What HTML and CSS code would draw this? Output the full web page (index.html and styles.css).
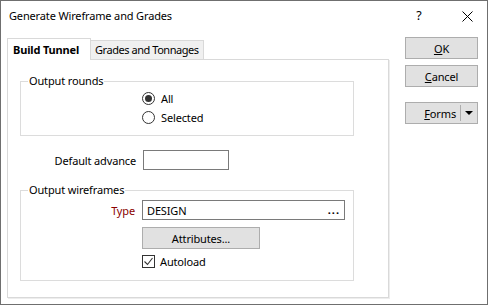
FILE: index.html
```html
<!DOCTYPE html>
<html>
<head>
<meta charset="utf-8">
<link rel="stylesheet" href="styles.css">
</head>
<body>
<div class="dialog">
  <div class="titlebar">
    <span class="title">Generate Wireframe and Grades</span>
    <span class="help">?</span>
    <span class="close"><svg width="11" height="11" viewBox="0 0 11 11"><path d="M0.5 0.5 L10.5 10.5 M10.5 0.5 L0.5 10.5" stroke="#000" stroke-width="1" fill="none"/></svg></span>
  </div>
  <div class="content">
    <div class="tabs-area">
      <div class="tabs">
        <div class="tab active">Build Tunnel</div>
        <div class="tab tight">Grades and Tonnages</div>
      </div>
      <div class="panel">
        <div class="group g-rounds">
          <span class="legend">Output rounds</span>
          <div class="radios">
            <div class="radio"><span class="rb checked"></span>All</div>
            <div class="radio"><span class="rb"></span>Selected</div>
          </div>
        </div>
        <div class="row advance">
          <span class="lbl w116">Default advance</span>
          <span class="input short"></span>
        </div>
        <div class="group g-wf">
          <span class="legend">Output wireframes</span>
          <div class="row">
            <span class="lbl w114 red">Type</span>
            <span class="input long"><span>DESIGN</span><span class="dots">...</span></span>
          </div>
          <div class="btn attr">Attributes...</div>
          <div class="check"><span class="cb"><svg width="11" height="11" viewBox="0 0 11 11"><path d="M1.5 5.5 L4.5 8.5 L9.5 2" stroke="#333" stroke-width="1.1" fill="none"/></svg></span>Autoload</div>
        </div>
      </div>
    </div>
    <div class="buttons">
      <div class="btn side"><span><u>O</u>K</span></div>
      <div class="btn side cancel"><span><u>C</u>ancel</span></div>
      <div class="btn side forms">
        <span class="forms-label"><u>F</u>orms</span>
        <span class="sep"></span>
        <span class="arrow"></span>
      </div>
    </div>
  </div>
</div>
</body>
</html>
```

FILE: styles.css
```css
* { box-sizing: border-box; }
html, body { margin: 0; padding: 0; background: #fff; }
body {
  font-family: "Noto Sans", "Open Sans", sans-serif;
  font-size: 11px;
  letter-spacing: -0.15px;
  color: #000;
}
.dialog {
  width: 488px;
  height: 305px;
  border: 1px solid #6f6f6f;
  background: #fff;
  display: flex;
  flex-direction: column;
}
.titlebar {
  height: 29px;
  display: flex;
  align-items: center;
  flex: none;
  font-size: 11px;
}
.title { padding-left: 8px; flex: 1; }
.help { width: 12px; text-align: center; margin-right: 37px; font-size: 12.5px; }
.close { width: 11px; height: 11px; margin-right: 14px; display: flex; margin-top: 1px; }
.content {
  display: flex;
  padding: 8px 0 0 6px;
}
.tabs-area { width: 383px; flex: none; }
.tabs {
  display: flex;
  align-items: flex-end;
  height: 21px;
}
.tab {
  height: 19px;
  line-height: 18px;
  border: 1px solid #d9d9d9;
  border-left: none;
  border-bottom: none;
  background: #f0f0f0;
  padding-left: 4px;
  width: 113px;
  white-space: nowrap;
}
.tab.tight { letter-spacing: -0.45px; }
.tab.active {
  height: 22px;
  line-height: 21px;
  margin-bottom: -1px;
  background: #fff;
  border-left: 1px solid #d9d9d9;
  font-weight: bold;
  width: 84px;
  padding-left: 5px;
  position: relative;
  z-index: 1;
}
.panel {
  width: 382px;
  height: 239px;
  border: 1px solid #d9d9d9;
  box-shadow: 1px 1px 0 #ededed;
  padding: 0 0 0 12px;
}
.group {
  width: 334px;
  border: 1px solid #dcdcdc;
  position: relative;
  margin-top: 21px;
}
.legend {
  position: absolute;
  left: 7px;
  top: -9px;
  background: #fff;
  padding: 0 1px;
  line-height: 16px;
}
.g-rounds { height: 55px; }
.radios { padding: 7px 0 0 121px; }
.radio {
  height: 19px;
  display: flex;
  align-items: center;
  gap: 6px;
}
.rb {
  width: 13px;
  height: 13px;
  border: 1px solid #333;
  border-radius: 50%;
  display: flex;
  align-items: center;
  justify-content: center;
  flex: none;
}
.rb.checked::after {
  content: "";
  width: 7px;
  height: 7px;
  border-radius: 50%;
  background: #333;
}
.row { display: flex; align-items: center; gap: 7px; }
.advance { margin-top: 14px; }
.lbl { text-align: right; flex: none; white-space: nowrap; }
.w116 { width: 116px; }
.w114 { width: 114px; }
.red { color: #8b0000; }
.input {
  height: 20px;
  border: 1px solid #7a7a7a;
  display: flex;
  align-items: center;
  padding: 0 4px 0 4px;
  flex: none;
}
.input.short { width: 86px; }
.input.long { width: 203px; justify-content: space-between; }
.dots { font-weight: bold; letter-spacing: 1px; margin-bottom: 2px; }
.g-wf { height: 91px; margin-top: 20px; padding-top: 9px; }
.btn {
  background: #e1e1e1;
  border: 1px solid #adadad;
  display: flex;
  align-items: center;
  justify-content: center;
}
.attr { width: 118px; height: 22px; margin: 7px 0 0 121px; }
.check {
  display: flex;
  align-items: center;
  gap: 5px;
  margin: 6px 0 0 121px;
  height: 13px;
}
.cb {
  width: 13px;
  height: 13px;
  border: 1px solid #333;
  display: flex;
  align-items: center;
  justify-content: center;
  flex: none;
}
.buttons {
  margin-left: 15px;
  margin-top: -1px;
  display: flex;
  flex-direction: column;
  gap: 6px;
}
.side { width: 73px; height: 22px; }
.forms { margin-top: 9px; justify-content: flex-start; }
.forms-label { width: 54px; text-align: right; padding-right: 4px; }
.sep { width: 1px; height: 16px; background: #adadad; }
.arrow {
  margin-left: 4px;
  width: 0;
  height: 0;
  border-left: 4px solid transparent;
  border-right: 4px solid transparent;
  border-top: 4px solid #000;
}
```
